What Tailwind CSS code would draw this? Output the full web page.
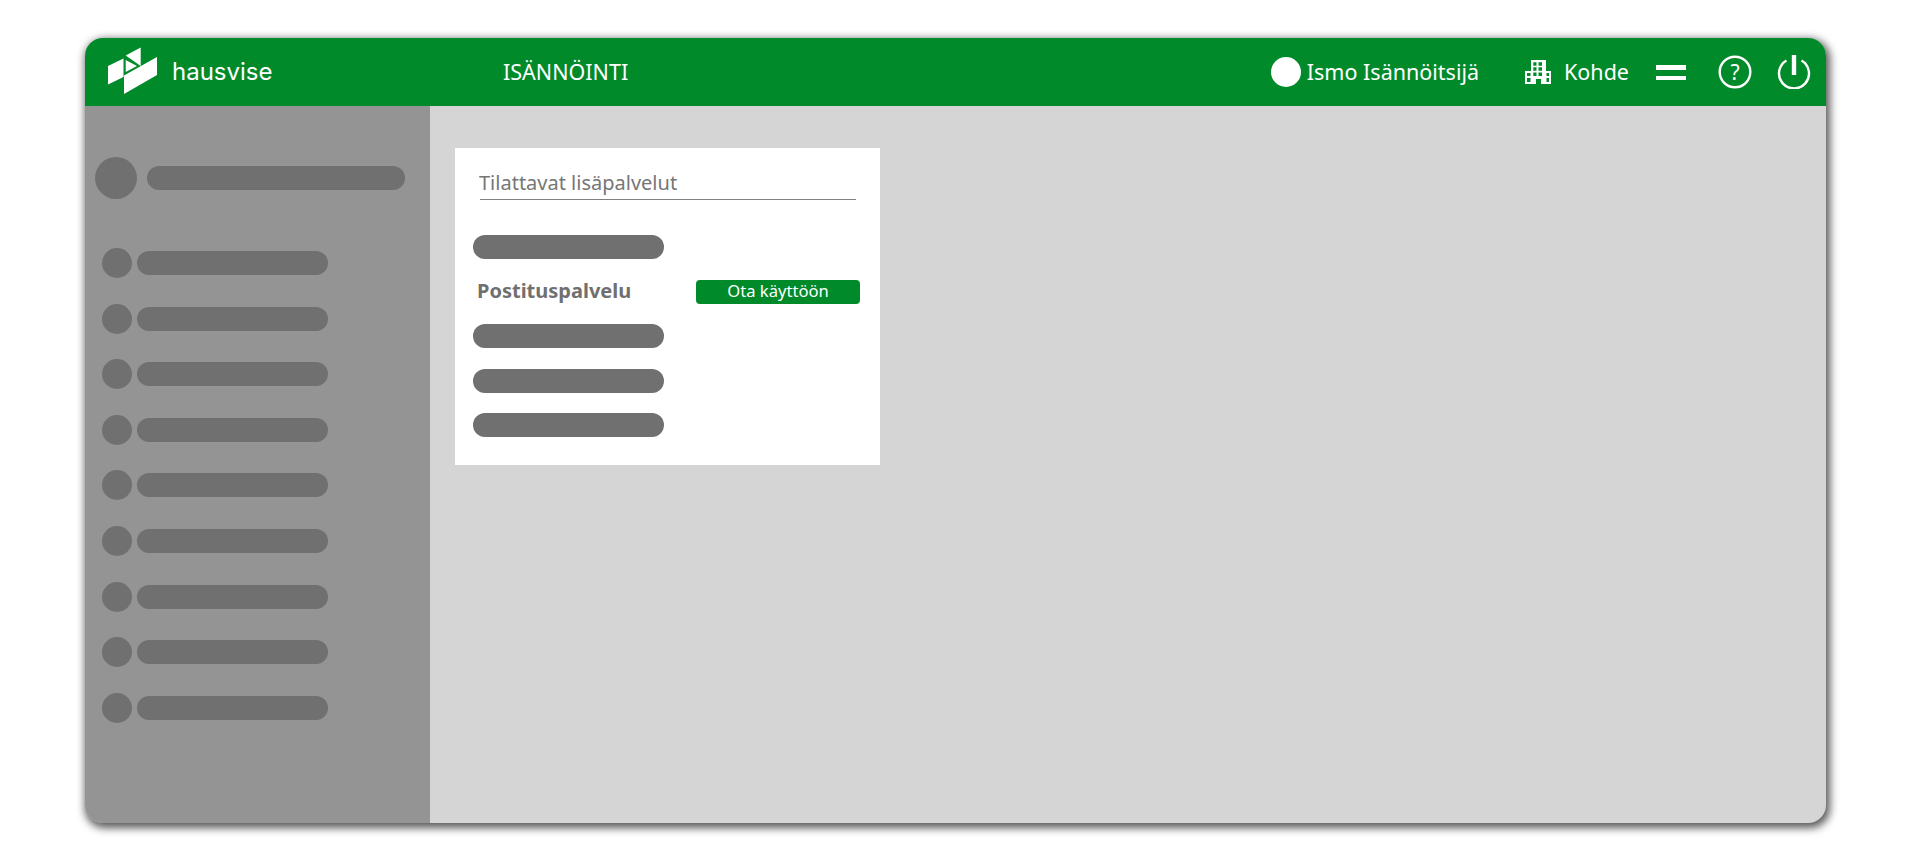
<!DOCTYPE html>
<html lang="fi">
<head>
    <meta charset="UTF-8">
    <title>Hausvise</title>
    <script src="https://cdn.jsdelivr.net/npm/@tailwindcss/browser@4"></script>
</head>
<body class="bg-white font-['Noto_Sans',sans-serif] overflow-hidden">
    <div class="h-[861px] pt-[38px] pl-[85px]">
        <!-- App frame -->
        <div class="w-[1741px] h-[785px] flex flex-col rounded-[18px] overflow-hidden bg-[#d5d5d5] shadow-[2px_3px_8px_2px_rgba(0,0,0,0.65)]">
            <!-- Header -->
            <header class="h-[68px] shrink-0 bg-[#018a2a] text-white flex items-center">
                <svg class="ml-[15px] w-[60px] h-[64px] shrink-0" viewBox="0 0 60 64" fill="#fff">
                    <path d="M8 26 L23.5 18.5 L23.5 37 L8 44.5 Z"/>
                    <path d="M25.7 15.5 L40.7 7.5 L40.7 26 Z"/>
                    <path d="M25.7 20 L37 26 L25.7 32 Z"/>
                    <path d="M24 35.5 L57 17 L57 35 L24 54 Z"/>
                </svg>
                <span class="ml-[12px] w-[331px] shrink-0 font-['Inter',sans-serif] text-[24px] leading-none">hausvise</span>
                <span class="text-[21.5px] leading-none">ISÄNNÖINTI</span>
                <div class="ml-auto flex items-center">
                    <span class="w-[30px] h-[30px] rounded-full bg-white"></span>
                    <span class="ml-[6px] text-[21.5px] leading-none">Ismo Isännöitsijä</span>
                    <svg class="ml-[46px] w-[26px] h-[24px]" viewBox="0 0 26 24" fill="#fff" fill-rule="evenodd">
                        <path d="M6 0 H21 V11 H26 V24 H0 V11 H6 Z M8.3 2.3 V5.7 H11.5 V2.3 Z M13.5 2.3 V5.7 H17 V2.3 Z M8.3 7.3 V10.7 H11.5 V7.3 Z M13.5 7.3 V10.7 H17 V7.3 Z M8.3 12.5 V16 H11.5 V12.5 Z M13.5 12.5 V16 H17 V12.5 Z M2 13 V16 H5.5 V13 Z M21.5 13 V16 H24 V13 Z M2 18 V22 H5.5 V18 Z M21.5 18 V22 H24 V18 Z M11 19 V24 H16 V19 Z"/>
                    </svg>
                    <span class="ml-[13px] text-[21.5px] leading-none">Kohde</span>
                    <div class="ml-[27px] w-[30px] flex flex-col gap-[6px]">
                        <span class="h-[5px] bg-white"></span>
                        <span class="h-[4px] bg-white"></span>
                    </div>
                    <svg class="ml-[32px] w-[34px] h-[34px]" viewBox="0 0 34 34" fill="none">
                        <circle cx="17" cy="17" r="15.3" stroke="#fff" stroke-width="2.4"/>
                        <text x="17" y="24.5" text-anchor="middle" fill="#fff" font-size="21" font-family="Noto Sans">?</text>
                    </svg>
                    <svg class="ml-[25px] mr-[15px] w-[34px] h-[34px]" viewBox="0 0 34 34" fill="none" stroke="#fff">
                        <path d="M9.5 5.5 A15 15 0 1 0 24.5 5.5" stroke-width="2.4"/>
                        <path d="M17 0 V20" stroke-width="4.4"/>
                    </svg>
                </div>
            </header>
            <div class="flex-1 flex min-h-0">
                <!-- Sidebar placeholder -->
                <aside class="w-[345px] shrink-0 bg-[#949494] pt-[51px]">
                    <div class="flex items-center pl-[10px]">
                        <span class="w-[42px] h-[42px] rounded-full bg-[#707070]"></span>
                        <span class="ml-[10px] w-[258px] h-[24px] rounded-full bg-[#707070]"></span>
                    </div>
                    <div class="mt-[49px] pl-[17px] flex flex-col gap-[25.6px]">
                        <div class="flex items-center"><span class="w-[30px] h-[30px] rounded-full bg-[#707070]"></span><span class="ml-[5px] w-[191px] h-[24px] rounded-full bg-[#707070]"></span></div>
                        <div class="flex items-center"><span class="w-[30px] h-[30px] rounded-full bg-[#707070]"></span><span class="ml-[5px] w-[191px] h-[24px] rounded-full bg-[#707070]"></span></div>
                        <div class="flex items-center"><span class="w-[30px] h-[30px] rounded-full bg-[#707070]"></span><span class="ml-[5px] w-[191px] h-[24px] rounded-full bg-[#707070]"></span></div>
                        <div class="flex items-center"><span class="w-[30px] h-[30px] rounded-full bg-[#707070]"></span><span class="ml-[5px] w-[191px] h-[24px] rounded-full bg-[#707070]"></span></div>
                        <div class="flex items-center"><span class="w-[30px] h-[30px] rounded-full bg-[#707070]"></span><span class="ml-[5px] w-[191px] h-[24px] rounded-full bg-[#707070]"></span></div>
                        <div class="flex items-center"><span class="w-[30px] h-[30px] rounded-full bg-[#707070]"></span><span class="ml-[5px] w-[191px] h-[24px] rounded-full bg-[#707070]"></span></div>
                        <div class="flex items-center"><span class="w-[30px] h-[30px] rounded-full bg-[#707070]"></span><span class="ml-[5px] w-[191px] h-[24px] rounded-full bg-[#707070]"></span></div>
                        <div class="flex items-center"><span class="w-[30px] h-[30px] rounded-full bg-[#707070]"></span><span class="ml-[5px] w-[191px] h-[24px] rounded-full bg-[#707070]"></span></div>
                        <div class="flex items-center"><span class="w-[30px] h-[30px] rounded-full bg-[#707070]"></span><span class="ml-[5px] w-[191px] h-[24px] rounded-full bg-[#707070]"></span></div>
                    </div>
                </aside>
                <!-- Content -->
                <main class="flex-1 pt-[42px] pl-[25px]">
                    <div class="w-[425px] h-[317px] bg-white pt-[21px] pl-[18px]">
                        <div class="ml-[7px] w-[376px] h-[31px] border-b border-[#808080]">
                            <span class="block -ml-[1px] text-[20px] leading-[27px] text-[#767676]">Tilattavat lisäpalvelut</span>
                        </div>
                        <div class="mt-[35px] flex flex-col">
                            <span class="w-[191px] h-[24px] rounded-full bg-[#707070]"></span>
                            <div class="mt-[21px] h-[24px] flex items-center">
                                <span class="w-[223px] pl-[4px] pb-[2px] text-[20px] leading-none font-bold text-[#707070]">Postituspalvelu</span>
                                <span class="w-[164px] h-[24px] rounded-[4px] bg-[#018a2a] text-white text-[16.6px] leading-[22px] text-center">Ota käyttöön</span>
                            </div>
                            <span class="mt-[20px] w-[191px] h-[24px] rounded-full bg-[#707070]"></span>
                            <span class="mt-[21px] w-[191px] h-[24px] rounded-full bg-[#707070]"></span>
                            <span class="mt-[20px] w-[191px] h-[24px] rounded-full bg-[#707070]"></span>
                        </div>
                    </div>
                </main>
            </div>
        </div>
    </div>
</body>
</html>
